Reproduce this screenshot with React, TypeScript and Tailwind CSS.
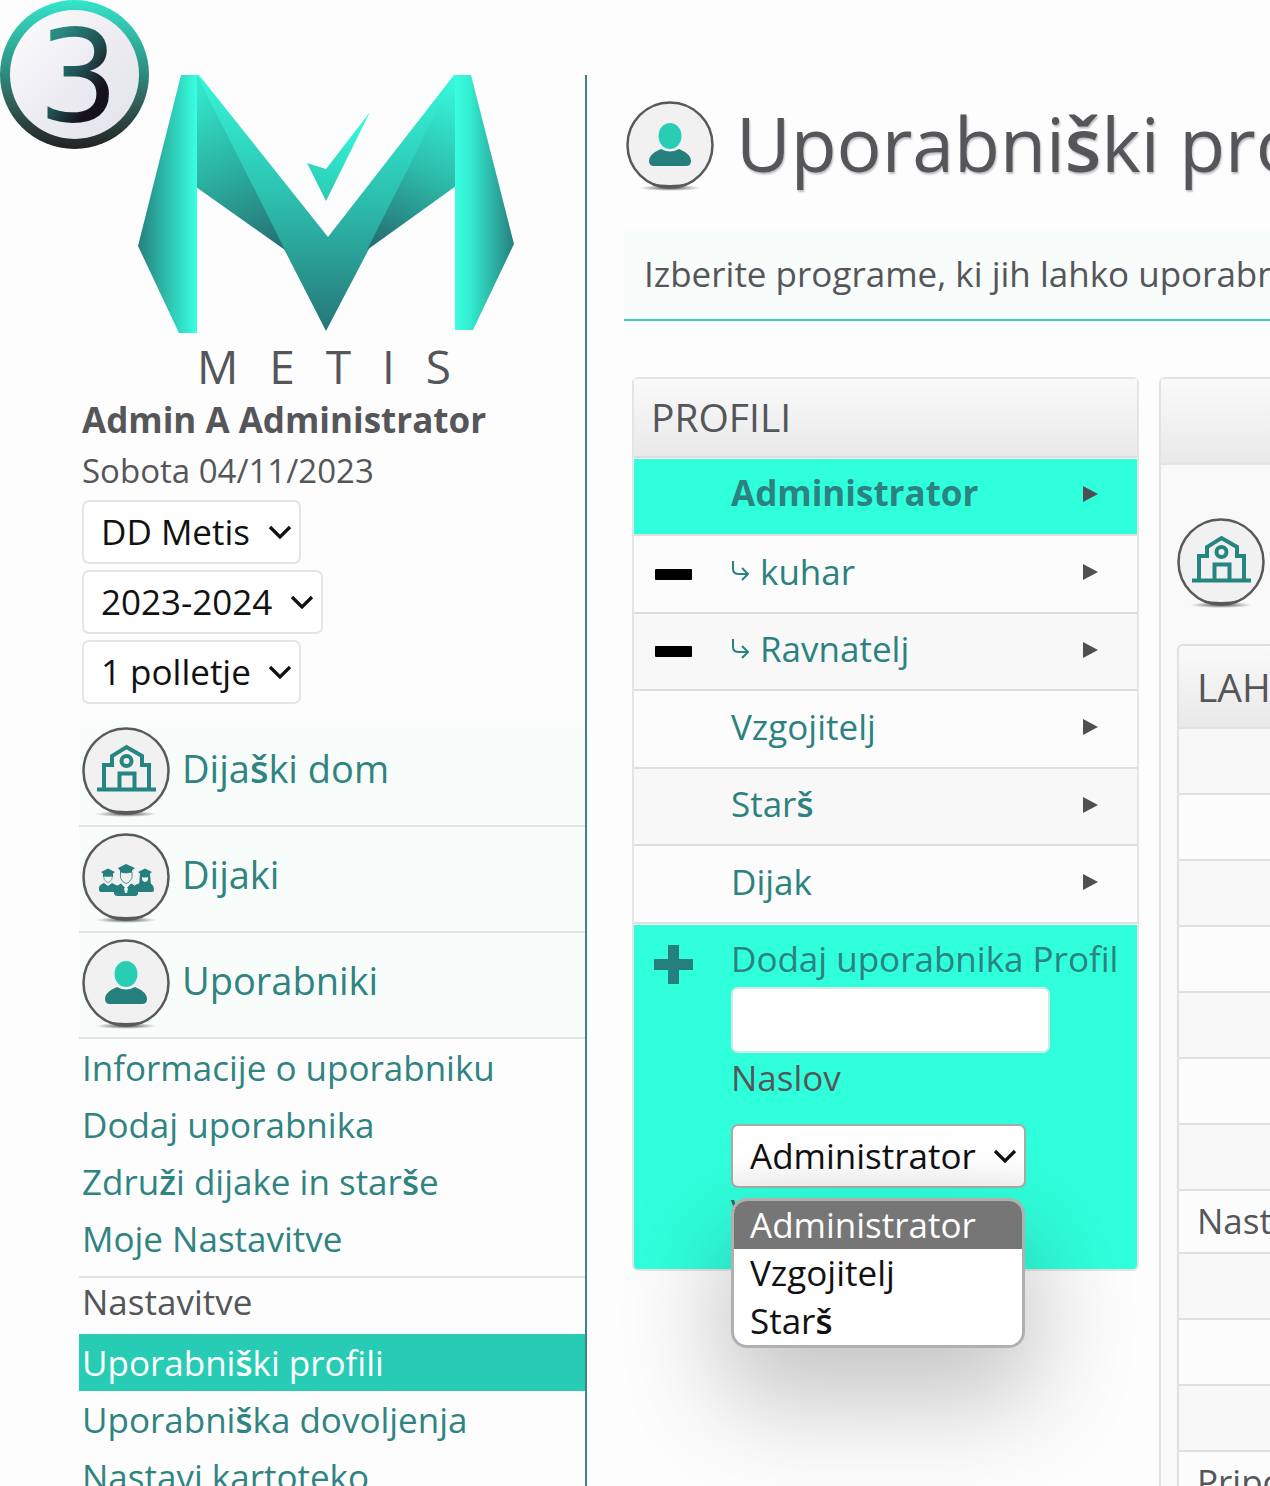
import { Fragment, type ReactNode } from 'react';

/** Text in which the caron letters carry the heavier weight. */
function Txt({ children }: { children: string }) {
  return (
    <>
      {children.split(/([šž])/).map((part, i) =>
        part === 'š' || part === 'ž' ? (
          <span key={i} className="font-semibold">{part}</span>
        ) : (
          <Fragment key={i}>{part}</Fragment>
        ),
      )}
    </>
  );
}

function StepBadge() {
  return (
    <div className="absolute left-0 top-0 flex size-[149px] items-center justify-center rounded-full bg-linear-to-b from-[#33e6cb] via-[#2c8a7d] to-[#222222] p-[10px]">
      <div className="flex size-full items-center justify-center rounded-full bg-linear-to-br from-white via-[#ececf2] to-[#e2e2ea]">
        <span className="bg-linear-to-br from-[#2a8a84] from-25% via-[#1f5456] via-50% to-[#15121c] to-70% bg-clip-text pl-2 pt-1 font-['DejaVu_Sans'] text-[128px] leading-[128px] text-transparent">
          3
        </span>
      </div>
    </div>
  );
}

function Logo() {
  return (
    <div className="flex flex-col items-center">
      <svg viewBox="137 75 378 258" className="block h-[258px] w-[378px]" role="img" aria-label="Metis logo">
        <defs>
          <linearGradient id="lgL" x1="0" x2="1"><stop offset="0" stopColor="#267f7d" /><stop offset="0.85" stopColor="#33edd1" /><stop offset="1" stopColor="#3bffe2" /></linearGradient>
          <linearGradient id="lgR" x1="1" x2="0"><stop offset="0" stopColor="#267f7d" /><stop offset="0.75" stopColor="#33edd1" /><stop offset="1" stopColor="#3bffe2" /></linearGradient>
          <linearGradient id="lgV" gradientUnits="userSpaceOnUse" x1="326" y1="75" x2="326" y2="332"><stop offset="0" stopColor="#36f7da" /><stop offset="0.45" stopColor="#2dc3b1" /><stop offset="1" stopColor="#267577" /></linearGradient>
          <linearGradient id="lgA" gradientUnits="userSpaceOnUse" x1="200" y1="90" x2="275" y2="250"><stop offset="0" stopColor="#33e6cb" /><stop offset="0.5" stopColor="#2bae9f" /><stop offset="1" stopColor="#266f72" /></linearGradient>
          <linearGradient id="lgB" gradientUnits="userSpaceOnUse" x1="452" y1="85" x2="380" y2="245"><stop offset="0" stopColor="#36f7da" /><stop offset="0.5" stopColor="#2dbeac" /><stop offset="1" stopColor="#266f72" /></linearGradient>
          <linearGradient id="lgC" gradientUnits="userSpaceOnUse" x1="360" y1="112" x2="325" y2="202"><stop offset="0" stopColor="#37fbdd" /><stop offset="1" stopColor="#2dc9b4" /></linearGradient>
        </defs>
        <path d="M196 75H199L328 237L454 75H456V80L370 247L326 331L283 247L196 80Z" fill="url(#lgV)" />
        <path d="M196 75L198 77L285 250L196 187Z" fill="url(#lgA)" />
        <path d="M456 75L454 77L367 250L456 186Z" fill="url(#lgB)" />
        <path d="M181 75H197V333H179L138 246Z" fill="url(#lgL)" />
        <path d="M455 75H471L514 244L473 330H455Z" fill="url(#lgR)" />
        <path d="M307 163L326 169L370 112L326 201Z" fill="url(#lgC)" />
      </svg>
      <div className="mt-[9px] mr-1 flex w-[254px] justify-between text-[46px] leading-[48px]">
        {'METIS'.split('').map((c) => <span key={c}>{c}</span>)}
      </div>
    </div>
  );
}

function RoundIcon({ children }: { children: ReactNode }) {
  return (
    <svg viewBox="0 0 88 92" className="block h-[92px] w-[88px] shrink-0" aria-hidden="true">
      <defs>
        <radialGradient id="ground"><stop offset="0" stopColor="#333" stopOpacity="0.9" /><stop offset="1" stopColor="#555" stopOpacity="0" /></radialGradient>
      </defs>
      <ellipse cx="44" cy="87" rx="31" ry="3" fill="url(#ground)" />
      <circle cx="44" cy="44" r="42.500" fill="#f1f1f2" stroke="#58595b" strokeWidth="2.500" />
      <path d="M24 82Q44 91 64 82Q44 86 24 82Z" fill="#58595b" />
      {children}
    </svg>
  );
}

function House() {
  return (
    <RoundIcon>
      <g fill="none" stroke="#258580" strokeWidth="4">
        <path d="M15 62.500H74" />
        <path d="M22 61V38H30V29L44.500 20L60 29V38H67V61" />
        <circle cx="44.500" cy="34" r="5" />
        <path d="M37.500 61V46.500H52.500V61" />
      </g>
    </RoundIcon>
  );
}

function Person() {
  return (
    <RoundIcon>
      <ellipse cx="44" cy="35" rx="11.500" ry="13" fill="#28cdb4" />
      <path d="M35 48Q44 53 53 48Q65 53 65 60Q65 65 60 65H28Q23 65 23 60Q23 53 35 48Z" fill="#257f7d" />
    </RoundIcon>
  );
}

function Students() {
  return (
    <RoundIcon>
      <g fill="#257f7d">
        <path d="M19 39L26 35.500L33 39L31 40.500V44H21V40.500Z" />
        <path d="M56 39L63 35.500L70 39L68 40.500L69 53H57L58 40.500Z" />
        <path d="M36 35L44 31L53 35L50 37.500V41H38V37.500Z" />
        <path d="M17 57Q16 52 22 50L26 53L30 50L36 53V59H19Q17 59 17 57Z" />
        <path d="M53 59V52L58 50L63 53L68 50Q72 52 72 57Q72 59 70 59Z" />
        <path d="M32 60Q31 54 39 50.500L44 56L49 50.500Q57 54 56 60Q56 63 53 63H36Q32 63 32 60Z" />
      </g>
      <path d="M22 43Q26 44 30 43V46Q26 53 22 46Z" fill="#f1f1f2" stroke="#257f7d" strokeWidth="0.600" />
      <path d="M60 44Q63 45 66 44V47Q63 51 60 47Z" fill="#f1f1f2" />
      <path d="M38.500 39Q44 41 50 39V45Q44 56 38.500 45Z" fill="#f1f1f2" stroke="#257f7d" strokeWidth="0.800" />
      <path d="M44 54L46 55.500L45 60H43L42 55.500Z" fill="#f1f1f2" />
    </RoundIcon>
  );
}

function Dropdown({ label, options, strong }: { label: string; options: string[]; strong?: boolean }) {
  return (
    <div className="relative w-fit">
      <select
        aria-label={label}
        className={
          (strong ? 'border-[#aaaaaa] bg-linear-to-b from-white from-60% to-[#f4f4f4]' : 'border-[#e5e5e5] bg-white') +
          ' block h-16 appearance-none rounded-[7px] border-2 pl-[17px] pr-[48px] text-[35px] leading-[48px] text-[#111111]'
        }
      >
        {options.map((o) => <option key={o}>{o}</option>)}
      </select>
      <svg viewBox="0 0 24 16" className="pointer-events-none absolute right-[9px] top-6 h-4 w-6" aria-hidden="true">
        <path d="M2 3L12 13L22 3" fill="none" stroke="#111" strokeWidth="3.200" />
      </svg>
    </div>
  );
}

const sections = [
  { label: 'Dijaški dom', icon: <House /> },
  { label: 'Dijaki', icon: <Students /> },
  { label: 'Uporabniki', icon: <Person /> },
];

const userLinks = ['Informacije o uporabniku', 'Dodaj uporabnika', 'Združi dijake in starše', 'Moje Nastavitve'];

function Sidebar() {
  return (
    <aside className="ml-[79px] w-[508px] shrink-0 border-r-2 border-[#3c8583]">
      <div className="pr-3">
        <Logo />
      </div>
      <div className="pl-[3px]">
        <p className="mt-1 text-[35px] leading-[52px] font-bold">Admin A Administrator</p>
        <p className="text-[33px] leading-[50px]">Sobota 04/11/2023</p>
        <div className="mt-1 flex flex-col gap-[6px]">
          <Dropdown label="Dom" options={['DD Metis']} />
          <Dropdown label="Šolsko leto" options={['2023-2024']} />
          <Dropdown label="Obdobje" options={['1 polletje']} />
        </div>
      </div>
      <nav className="mt-[17px] text-[#2f8482]">
        {sections.map((s) => (
          <a key={s.label} href="#" className="flex h-[106px] items-center gap-3 border-b-2 border-[#dfe6e5] bg-[#f8fcfb] pl-[3px] text-[38px]">
            {s.icon}
            <span className="pb-[10px]"><Txt>{s.label}</Txt></span>
          </a>
        ))}
        <ul className="border-b-2 border-[#e2e4e4] pb-[9px] text-[35px] leading-[57px]">
          {userLinks.map((l) => (
            <li key={l} className="pl-[3px]"><a href="#"><Txt>{l}</Txt></a></li>
          ))}
        </ul>
        <p className="pl-[3px] text-[35px] leading-[48px] text-[#55565a]">Nastavitve</p>
        <ul className="mt-2 text-[35px] leading-[57px]">
          <li className="bg-[#28ccb5] pl-[3px] text-white"><a href="#" aria-current="page"><Txt>Uporabniški profili</Txt></a></li>
          <li className="pl-[3px]"><a href="#"><Txt>Uporabniška dovoljenja</Txt></a></li>
          <li className="pl-[3px]"><a href="#">Nastavi kartoteko</a></li>
        </ul>
      </nav>
    </aside>
  );
}

function Caret() {
  return (
    <svg viewBox="0 0 16 16" className="size-4 shrink-0" aria-hidden="true">
      <path d="M1 0L16 8L1 16Z" fill="#4f5054" />
    </svg>
  );
}

const profiles = [
  { name: 'Administrator', active: true },
  { name: 'kuhar', child: true },
  { name: 'Ravnatelj', child: true },
  { name: 'Vzgojitelj' },
  { name: 'Starš' },
  { name: 'Dijak' },
];

function Profiles() {
  return (
    <section className="w-[507px] shrink-0 rounded-[6px] border-2 border-[#e4e4e4]">
      <h2 className="h-[79px] border-b-2 border-[#dddddd] bg-linear-to-b from-[#fafafa] to-[#e9e9e9] pl-[17px] text-[39px] leading-[76px]">
        PROFILI
      </h2>
      <ul className="pt-px">
        {profiles.map((p) => (
          <li
            key={p.name}
            className={
              (p.active ? 'bg-[#30ffdb] pb-[6px] font-bold' : 'pb-1 even:bg-[#fcfcfc] odd:bg-[#f8f8f8]') +
              ' flex h-[77px] items-center border-b-2 border-[#dedede] pr-[39px] text-[35px] text-[#2b8280] even:h-[78px]'
            }
          >
            <span className="flex w-[97px] shrink-0 pl-[21px]">
              {p.child && <button type="button" aria-label={'Odstrani ' + p.name} className="mt-1 h-[11px] w-[37px] rounded-[1px] bg-black" />}
            </span>
            <a href="#" className="flex flex-1 items-center">
              {p.child && (
                <svg viewBox="0 0 18 22" className="mr-[11px] h-[22px] w-[18px]" aria-hidden="true">
                  <path d="M2 0V8Q2 13 8 13H16M11 7L17 13L11 19" fill="none" stroke="currentColor" strokeWidth="2" />
                </svg>
              )}
              <span><Txt>{p.name}</Txt></span>
            </a>
            <Caret />
          </li>
        ))}
      </ul>
      <form className="mt-px flex h-[344px] rounded-b-[4px] bg-[#30ffdb]">
        <button type="button" aria-label="Dodaj profil" className="mt-5 ml-5 h-[39px] w-[39px] shrink-0">
          <svg viewBox="0 0 39 39" className="block size-[39px]"><path d="M14 0H25V14H39V25H25V39H14V25H0V14H14Z" fill="#257f7d" /></svg>
        </button>
        <div className="ml-[38px] flex flex-col items-start text-[35px]">
          <span className="mt-[10px] whitespace-nowrap leading-[48px] text-[#2b8280]">Dodaj uporabnika Profil</span>
          <input id="title" type="text" className="mt-1 h-[66px] w-[319px] rounded-[7px] border-2 border-[#cfe9e4] bg-white px-4" />
          <label htmlFor="title" className="mt-px leading-[48px]">Naslov</label>
          <div className="relative mt-[22px]">
            <Dropdown strong label="Vrsta" options={['Administrator', 'Vzgojitelj', 'Starš']} />
            <span className="block leading-[48px]">Vrsta</span>
            <ul
              role="listbox"
              aria-label="Vrsta"
              className="absolute left-0 top-[74px] w-[294px] overflow-hidden rounded-2xl border-3 border-[#b0b0b0] bg-white bg-clip-padding leading-[48px] text-[#111111] shadow-[0_44px_100px_10px_rgba(0,0,0,0.22)]"
            >
              <li role="option" aria-selected="true" className="bg-[#767676] pl-4 text-white">Administrator</li>
              <li role="option" aria-selected="false" className="pl-4">Vzgojitelj</li>
              <li role="option" aria-selected="false" className="pl-4"><Txt>Starš</Txt></li>
            </ul>
          </div>
        </div>
      </form>
    </section>
  );
}

const programRows = ['', '', '', '', '', '', '', 'Nastavitve', '', '', '', 'Pripomočki', ''];

function Programs() {
  return (
    <section className="min-w-0 flex-1 rounded-tl-[6px] border-t-2 border-l-2 border-[#e2e2e2] bg-[#f9f9f9]">
      <div className="h-[86px] border-b-2 border-[#e4e4e4] bg-linear-to-b from-[#fafafa] to-[#e9e9e9]" />
      <div className="pl-4 pt-[53px]">
        <House />
        <div className="mt-[34px] overflow-hidden rounded-tl-[6px] border-t-2 border-l-2 border-[#e0e0e0]">
          <h2 className="h-[83px] border-b-2 border-[#e2e2e2] bg-linear-to-b from-[#fafafa] to-[#e9e9e9] pl-[18px] text-[39px] leading-[82px]">
            LAHKO
          </h2>
          <ul className="text-[35px]">
            {programRows.map((r, i) => (
              <li key={i} className={(r ? 'h-[63px] leading-[60px]' : 'h-[66px]') + ' border-b-2 border-[#e0e0e0] pl-[18px] even:bg-[#fcfcfc] odd:bg-[#f8f8f8]'}>
                {r}
              </li>
            ))}
          </ul>
        </div>
      </div>
    </section>
  );
}

export default function App() {
  return (
    <div className="relative flex h-screen overflow-hidden bg-[#fdfdfd] pt-[75px] font-['Open_Sans','Noto_Sans',sans-serif] text-[#55565a]">
      <Sidebar />
      <main className="min-w-0 flex-1 pl-[37px]">
        <header className="flex h-[155px] items-center gap-[22px] pl-[2px]">
          <div className="pb-3"><Person /></div>
          <h1 className="pb-5 text-[75px] leading-[100px] whitespace-nowrap text-shadow-[1px_2px_2px_rgba(0,0,0,0.25)]">
            <Txt>Uporabniški profili</Txt>
          </h1>
        </header>
        <p className="h-[91px] overflow-hidden border-b-2 border-[#3fcdbb] bg-[#f8fcfb] pl-5 text-[35px] leading-[88px] whitespace-nowrap">
          Izberite programe, ki jih lahko uporabniki
        </p>
        <div className="mt-14 flex items-start gap-5 pl-2">
          <Profiles />
          <Programs />
        </div>
      </main>
      <StepBadge />
    </div>
  );
}
